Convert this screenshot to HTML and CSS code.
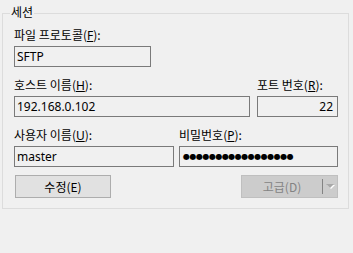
FILE: index.html
```html
<!DOCTYPE html>
<html>
    <head>
        <meta name="viewport" content="width=device-width, initial-scale=1.0">
        <title>세션</title>
        <link rel="stylesheet" href="styles.css">
    </head>
    <body>
        <div class="group">
            <span class="legend">세션</span>
            <div class="row rowProto">
                <div class="field">
                    <label>파일 프로토콜(<u>F</u>):</label>
                    <div class="edit">SFTP</div>
                </div>
            </div>
            <div class="row rowHost">
                <div class="field">
                    <label>호스트 이름(<u>H</u>):</label>
                    <div class="edit">192.168.0.102</div>
                </div>
                <div class="field">
                    <label>포트 번호(<u>R</u>):</label>
                    <div class="edit num">22</div>
                </div>
            </div>
            <div class="row rowUser">
                <div class="field">
                    <label>사용자 이름(<u>U</u>):</label>
                    <div class="edit">master</div>
                </div>
                <div class="field">
                    <label>비밀번호(<u>P</u>):</label>
                    <div class="edit pass">●●●●●●●●●●●●●●●●●</div>
                </div>
            </div>
            <div class="buttons">
                <button class="btn">수정(E)</button>
                <div class="btn split">
                    <span class="splitText">고급(D)</span>
                    <span class="splitArrow">
                        <svg width="9" height="6" viewBox="0 0 9 6">
                            <polygon points="1,1 9,1 5,5" fill="#ffffff"/>
                            <polygon points="0,0 8,0 4,4" fill="#a8a8a8"/>
                        </svg>
                    </span>
                </div>
            </div>
        </div>
    </body>
</html>
```

FILE: styles.css
```css
body{
    margin: 0px;
    background-color: #f0f0f0;
    color: #000000;
    font-family: "Noto Sans", "Noto Sans CJK KR", sans-serif;
    font-size: 12px;
    width: 353px;
    height: 253px;
    overflow: hidden;
}
.group{
    position: relative;
    margin: 13px 4px 0px 2px;
    border: 1px solid #dcdcdc;
    padding: 13px 10px 10px 11px;
}
.legend{
    position: absolute;
    top: -10px;
    left: 7px;
    padding: 0px 1px;
    line-height: 16px;
    background-color: #f0f0f0;
    font-family: "Noto Sans CJK KR", sans-serif;
}
.row{
    display: grid;
    column-gap: 7px;
    margin-bottom: 10px;
}
.rowProto{
    grid-template-columns: 137px;
}
.rowHost{
    grid-template-columns: 236px 81px;
}
.rowUser{
    grid-template-columns: 160px 159px;
    column-gap: 5px;
    margin-bottom: 8px;
}
.field{
    display: flex;
    flex-direction: column;
}
label{
    line-height: 16px;
    height: 16px;
    margin-bottom: 3px;
    white-space: nowrap;
    font-family: "Noto Sans CJK KR", sans-serif;
}
label u{
    font-family: "Noto Sans", sans-serif;
}
.edit{
    box-sizing: border-box;
    height: 21px;
    border: 1px solid #7a7a7a;
    background-color: #f0f0f0;
    padding: 0px 4px 0px 2px;
    line-height: 19px;
    white-space: nowrap;
    overflow: hidden;
}
.num{
    text-align: right;
}
.pass{
    font-family: "DejaVu Sans", sans-serif;
    font-size: 8px;
    letter-spacing: -0.5px;
    padding-left: 3px;
}
.buttons{
    display: flex;
    justify-content: space-between;
    padding-left: 1px;
}
.btn{
    box-sizing: border-box;
    height: 23px;
    width: 96px;
    border: 1px solid #adadad;
    background-color: #e1e1e1;
    font-family: "Noto Sans CJK KR", sans-serif;
    font-size: 12px;
    color: #000000;
    padding: 0px;
    margin: 0px;
}
.split{
    width: 97px;
    display: flex;
    align-items: stretch;
    border-color: #bfbfbf;
    background-color: #cccccc;
    color: #838383;
}
.splitText{
    flex: 1;
    text-align: center;
    line-height: 21px;
}
.splitArrow{
    width: 14px;
    margin: 3px 0px;
    border-left: 1px solid #838383;
    display: flex;
    align-items: center;
    justify-content: center;
}
```
